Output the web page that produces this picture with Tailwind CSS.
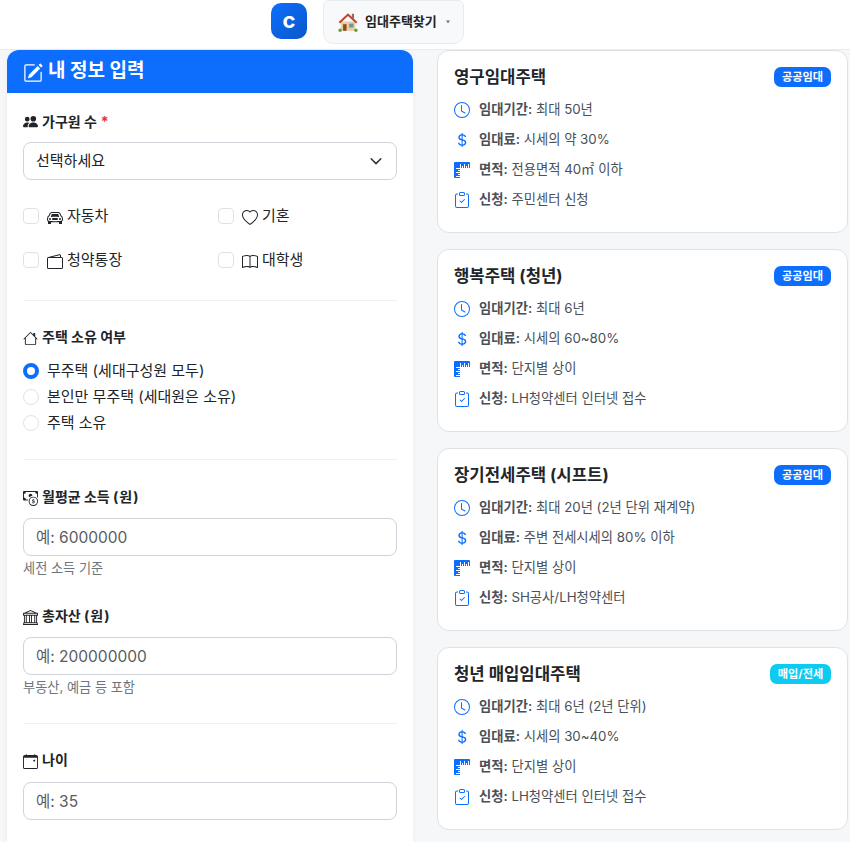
<!DOCTYPE html>
<html lang="ko">
<head>
<meta charset="utf-8">
<script src="https://cdn.jsdelivr.net/npm/@tailwindcss/browser@4"></script>
<title>임대주택찾기</title>
</head>
<body class="h-[842px] overflow-hidden bg-[#f6f7f9] text-[#212529] font-['Inter','Noto_Sans_CJK_KR',sans-serif]">
<header class="h-[50px] bg-white border-b border-[#e9ecef] flex items-start pl-[271px] gap-4">
  <div class="mt-[3px] w-9 h-9 rounded-[10px] bg-gradient-to-br from-[#0d6efd] to-[#0a58ca] flex items-center justify-center text-white font-bold text-[22px] leading-none pb-[2px]">c</div>
  <button class="h-[44px] w-[141px] rounded-b-[10px] rounded-t-[6px] bg-[#f8f9fa] border border-[#e9ecef] flex items-center pl-[13px] text-[13px] font-semibold text-[#212529]">
    <svg viewBox="0 0 20 20" class="w-[22px] h-[22px] mr-[6px] shrink-0"><path d="M3.500 9.500h13V18h-13z" fill="#e8cfa0"/><path d="M1.500 10 10 2l8.500 8-1.300 1.300L10 4.500 2.800 11.300z" fill="#c0452f"/><path d="M13.500 2.500h2v4.500h-2z" fill="#9c6b4f"/><path d="M5.500 12h3.200v6H5.500z" fill="#8a4b2a"/><path d="M11 11.500h4V15h-4z" fill="#6f93a8"/><circle cx="2.800" cy="17.500" r="1.500" fill="#5f9e3a"/><circle cx="17.200" cy="17.500" r="1.500" fill="#5f9e3a"/></svg>
    임대주택찾기
    <svg viewBox="0 0 8 8" class="w-1 h-1 ml-[9px] fill-[#6c757d]"><path d="M0 1h8L4 7z"/></svg>
  </button>
</header>
<main class="flex items-start pl-[7px] gap-6">
  <section class="w-[406px] shrink-0 bg-white rounded-t-[12px] shadow-[0_1px_6px_rgba(0,0,0,0.05)] h-[792px] overflow-hidden">
    <h2 class="h-[43px] bg-[#0d6efd] text-white flex items-center pl-4 text-[19px] font-bold gap-[5px] pb-[1px]">
      <svg viewBox="0 0 16 16" class="w-5 h-5 fill-white mt-[3px] shrink-0"><path d="M15.502 1.940a.5.5 0 0 1 0 .706L14.459 3.690l-2-2L13.502.646a.5.5 0 0 1 .707 0l1.293 1.293zm-1.750 2.456-2-2L4.939 9.210a.5.5 0 0 0-.121.196l-.805 2.414a.25.25 0 0 0 .316.316l2.414-.805a.5.5 0 0 0 .196-.12l6.813-6.814z"/><path fill-rule="evenodd" d="M1 13.500A1.500 1.500 0 0 0 2.500 15h11a1.500 1.500 0 0 0 1.500-1.500v-6a.5.5 0 0 0-1 0v6a.5.5 0 0 1-.5.5h-11a.5.5 0 0 1-.5-.5v-11a.5.5 0 0 1 .5-.5H9a.5.5 0 0 0 0-1H2.500A1.500 1.500 0 0 0 1 2.500z"/></svg>
      내 정보 입력
    </h2>
    <div class="px-4 pt-[18px]">
      <label class="flex items-center h-[21px] text-[14px] font-bold mb-[10px] gap-1">
        <svg viewBox="0 0 16 16" class="w-[15px] h-[15px] fill-[#212529] shrink-0"><path d="M7 14s-1 0-1-1 1-4 5-4 5 3 5 4-1 1-1 1zm4-6a3 3 0 1 0 0-6 3 3 0 0 0 0 6m-5.784 6A2.240 2.240 0 0 1 5 13c0-1.355.68-2.750 1.936-3.720A6.300 6.300 0 0 0 5 9c-4 0-5 3-5 4s1 1 1 1zM4.500 8a2.500 2.500 0 1 0 0-5 2.500 2.500 0 0 0 0 5"/></svg>
        가구원 수 <span class="text-[#dc3545]">*</span>
      </label>
      <div class="relative">
        <select class="w-full h-[38px] appearance-none bg-white border border-[#ced4da] rounded-lg pl-3 text-[15px] text-[#212529]"><option>선택하세요</option></select>
        <svg viewBox="0 0 16 16" class="absolute right-[14px] top-3 w-[14px] h-[14px] fill-none stroke-[#343a40] stroke-[1.8]"><path stroke-linecap="round" stroke-linejoin="round" d="m2.500 5.500 5.500 5.500 5.500-5.500"/></svg>
      </div>
      <div class="grid grid-cols-2 gap-x-[16px] mt-[14px] text-[15px]">
        <div class="h-[44px] flex items-center">
          <span class="w-4 h-4 border border-[#dee2e6] rounded-[4px] mr-2 shrink-0"></span>
          <svg viewBox="0 0 16 16" class="w-4 h-4 fill-[#212529] mr-1 shrink-0 mt-[3px]"><path d="M4 9a1 1 0 1 1-2 0 1 1 0 0 1 2 0m10 0a1 1 0 1 1-2 0 1 1 0 0 1 2 0M6 8a1 1 0 0 0 0 2h4a1 1 0 1 0 0-2zM4.862 4.276 3.906 6.190a.51.51 0 0 0 .497.731c.91-.073 2.350-.17 3.597-.17s2.688.097 3.597.17a.51.51 0 0 0 .497-.731l-.956-1.913A.5.5 0 0 0 11.691 4H4.309a.5.5 0 0 0-.447.276"/><path d="M2.520 3.515A2.500 2.500 0 0 1 4.820 2h6.362c1 0 1.904.596 2.298 1.515l.792 1.848c.075.175.21.319.38.404.5.25.855.715.965 1.262l.335 1.679q.05.242.049.49v.413c0 .814-.39 1.543-1 1.997V13.500a.5.5 0 0 1-.5.5h-2a.5.5 0 0 1-.5-.5v-1.338c-1.292.048-2.745.088-4 .088s-2.708-.04-4-.088V13.500a.5.5 0 0 1-.5.5h-2a.5.5 0 0 1-.5-.5v-1.892c-.61-.454-1-1.183-1-1.997v-.413a2.500 2.500 0 0 1 .049-.49l.335-1.680c.11-.546.465-1.012.964-1.261a.8.8 0 0 0 .381-.404l.792-1.848ZM4.820 3a1.500 1.500 0 0 0-1.379.91l-.792 1.847a1.800 1.800 0 0 1-.853.904.81.81 0 0 0-.43.564L1.030 8.904a1.500 1.500 0 0 0-.03.294v.413c0 .796.62 1.448 1.408 1.484 1.555.07 3.786.155 5.592.155s4.037-.084 5.592-.155A1.480 1.480 0 0 0 15 9.611v-.413q0-.148-.03-.294l-.335-1.680a.8.8 0 0 0-.43-.563 1.800 1.800 0 0 1-.853-.904l-.792-1.848A1.500 1.500 0 0 0 11.180 3z"/></svg>
          자동차
        </div>
        <div class="h-[44px] flex items-center">
          <span class="w-4 h-4 border border-[#dee2e6] rounded-[4px] mr-2 shrink-0"></span>
          <svg viewBox="0 0 16 16" class="w-4 h-4 fill-[#212529] mr-1 shrink-0 mt-[3px]"><path d="m8 2.748-.717-.737C5.600.281 2.514.878 1.400 3.053c-.523 1.023-.641 2.500.314 4.385.92 1.815 2.834 3.989 6.286 6.357 3.452-2.368 5.365-4.542 6.286-6.357.955-1.886.838-3.362.314-4.385C13.486.878 10.400.28 8.717 2.010zM8 15C-7.333 4.868 3.279-3.040 7.824 1.143q.09.083.176.171a3 3 0 0 1 .176-.17C12.720-3.042 23.333 4.867 8 15"/></svg>
          기혼
        </div>
        <div class="h-[44px] flex items-center">
          <span class="w-4 h-4 border border-[#dee2e6] rounded-[4px] mr-2 shrink-0"></span>
          <svg viewBox="0 0 16 16" class="w-4 h-4 fill-[#212529] mr-1 shrink-0 mt-[3px]"><path d="M12.136.326A1.500 1.500 0 0 1 14 1.780V3h.5A1.500 1.500 0 0 1 16 4.500v9a1.500 1.500 0 0 1-1.500 1.500h-13A1.500 1.500 0 0 1 0 13.500v-9a1.500 1.500 0 0 1 1.432-1.499zM5.562 3H13V1.780a.5.5 0 0 0-.621-.484zM1.500 4a.5.5 0 0 0-.5.5v9a.5.5 0 0 0 .5.5h13a.5.5 0 0 0 .5-.5v-9a.5.5 0 0 0-.5-.5z"/></svg>
          청약통장
        </div>
        <div class="h-[44px] flex items-center">
          <span class="w-4 h-4 border border-[#dee2e6] rounded-[4px] mr-2 shrink-0"></span>
          <svg viewBox="0 0 16 16" class="w-4 h-4 fill-[#212529] mr-1 shrink-0 mt-[3px]"><path d="M1 2.828c.885-.37 2.154-.769 3.388-.893 1.330-.134 2.458.063 3.112.752v9.746c-.935-.53-2.120-.603-3.213-.493-1.180.12-2.370.461-3.287.811zm7.500-.141c.654-.689 1.782-.886 3.112-.752 1.234.124 2.503.523 3.388.893v9.923c-.918-.35-2.107-.692-3.287-.81-1.094-.111-2.278-.039-3.213.492zM8 1.783C7.015.936 5.587.81 4.287.94c-1.514.153-3.042.672-3.994 1.105A.5.5 0 0 0 0 2.500v11a.5.5 0 0 0 .707.455c.882-.4 2.303-.881 3.680-1.020 1.409-.142 2.590.087 3.223.877a.5.5 0 0 0 .78 0c.633-.79 1.814-1.019 3.222-.877 1.378.139 2.800.62 3.681 1.020A.5.5 0 0 0 16 13.500v-11a.5.5 0 0 0-.293-.455c-.952-.433-2.480-.952-3.994-1.105C10.413.809 8.985.936 8 1.783"/></svg>
          대학생
        </div>
      </div>
      <hr class="border-[#eef0f2] mt-[18px]">
      <label class="flex items-center h-[21px] text-[14px] font-bold mt-[25px] mb-[11px] gap-1">
        <svg viewBox="0 0 16 16" class="w-[15px] h-[15px] fill-[#212529] shrink-0 mt-[3px]"><path d="M8.707 1.500a1 1 0 0 0-1.414 0L.646 8.146a.5.5 0 0 0 .708.708L2 8.207V13.500A1.500 1.500 0 0 0 3.500 15h9a1.500 1.500 0 0 0 1.500-1.500V8.207l.646.647a.5.5 0 0 0 .708-.708L13 5.793V2.500a.5.5 0 0 0-.5-.5h-1a.5.5 0 0 0-.5.5v1.293zM13 7.207V13.500a.5.5 0 0 1-.5.5h-9a.5.5 0 0 1-.5-.5V7.207l5-5z"/></svg>
        주택 소유 여부
      </label>
      <div class="text-[15px]">
        <div class="h-[26px] flex items-center gap-2"><span class="w-4 h-4 rounded-full border-[4.5px] border-[#0d6efd] bg-white shrink-0"></span>무주택 (세대구성원 모두)</div>
        <div class="h-[26px] flex items-center gap-2"><span class="w-4 h-4 rounded-full border border-[#dee2e6] shrink-0"></span>본인만 무주택 (세대원은 소유)</div>
        <div class="h-[26px] flex items-center gap-2"><span class="w-4 h-4 rounded-full border border-[#dee2e6] shrink-0"></span>주택 소유</div>
      </div>
      <hr class="border-[#eef0f2] mt-[23px]">
      <label class="flex items-center h-[21px] text-[14px] font-bold mt-[26px] mb-[11px] gap-1">
        <svg viewBox="0 0 16 16" class="w-[15px] h-[15px] fill-[#212529] shrink-0 mt-[3px]"><path fill-rule="evenodd" d="M11 15a4 4 0 1 0 0-8 4 4 0 0 0 0 8m5-4a5 5 0 1 1-10 0 5 5 0 0 1 10 0"/><path d="M9.438 11.944c.047.596.518 1.060 1.363 1.116v.44h.375v-.443c.875-.061 1.386-.529 1.386-1.207 0-.618-.39-.936-1.090-1.100l-.296-.07v-1.200c.376.043.614.248.671.532h.658c-.047-.575-.54-1.024-1.329-1.073V8.500h-.375v.45c-.747.073-1.255.522-1.255 1.158 0 .562.378.92 1.007 1.066l.248.061v1.272c-.384-.058-.639-.27-.696-.563h-.668zm1.360-1.354c-.369-.085-.569-.26-.569-.522 0-.294.216-.514.572-.578v1.100zm.432.746c.449.104.655.272.655.569 0 .339-.257.571-.709.614v-1.195z"/><path d="M1 0a1 1 0 0 0-1 1v8a1 1 0 0 0 1 1h4.083q.088-.517.258-1H3a2 2 0 0 0-2-2V3a2 2 0 0 0 2-2h10a2 2 0 0 0 2 2v3.528c.38.34.717.728 1 1.154V1a1 1 0 0 0-1-1z"/><path d="M9.998 5.083 10 5a2 2 0 1 0-3.132 1.650 6 6 0 0 1 3.130-1.567"/></svg>
        <span>월평균 소득 <span class="tracking-[1px]">(원)</span></span>
      </label>
      <input placeholder="예: 6000000" class="w-full h-[38px] border border-[#ced4da] rounded-lg px-3 text-[15.5px] placeholder:text-[#595c5f]">
      <p class="text-[13.2px] leading-[19px] text-[#6c757d] mt-[3px]">세전 소득 기준</p>
      <label class="flex items-center h-[21px] text-[14px] font-bold mt-[27px] mb-[11px] gap-1">
        <svg viewBox="0 0 16 16" class="w-[15px] h-[15px] fill-[#212529] shrink-0 mt-[3px]"><path d="m8 0 6.610 3h.89a.5.5 0 0 1 .5.5v2a.5.5 0 0 1-.5.5H15v7a.5.5 0 0 1 .485.38l.5 2a.498.498 0 0 1-.485.62H.5a.498.498 0 0 1-.485-.62l.5-2A.5.5 0 0 1 1 13V6H.5a.5.5 0 0 1-.5-.5v-2A.5.5 0 0 1 .5 3h.89zM3.777 3h8.447L8 1zM2 6v7h1V6zm2 0v7h2.500V6zm3.500 0v7h1V6zm2 0v7H12V6zM13 6v7h1V6zm2-1V4H1v1zm-.39 9H1.390l-.25 1h13.720z"/></svg>
        <span>총자산 <span class="tracking-[1px]">(원)</span></span>
      </label>
      <input placeholder="예: 200000000" class="w-full h-[38px] border border-[#ced4da] rounded-lg px-3 text-[15.5px] placeholder:text-[#595c5f]">
      <p class="text-[13.2px] leading-[19px] text-[#6c757d] mt-[3px]">부동산, 예금 등 포함</p>
      <hr class="border-[#eef0f2] mt-[26px]">
      <label class="flex items-center h-[21px] text-[14px] font-bold mt-[25px] mb-[12px] gap-1">
        <svg viewBox="0 0 16 16" class="w-[15px] h-[15px] fill-[#212529] shrink-0 mt-[3px]"><path d="M11 6.500a.5.5 0 0 1 .5-.5h1a.5.5 0 0 1 .5.5v1a.5.5 0 0 1-.5.5h-1a.5.5 0 0 1-.5-.5z"/><path d="M3.500 0a.5.5 0 0 1 .5.5V1h8V.5a.5.5 0 0 1 1 0V1h1a2 2 0 0 1 2 2v11a2 2 0 0 1-2 2H2a2 2 0 0 1-2-2V3a2 2 0 0 1 2-2h1V.5a.5.5 0 0 1 .5-.5M1 4v10a1 1 0 0 0 1 1h12a1 1 0 0 0 1-1V4z"/></svg>
        나이
      </label>
      <input placeholder="예: 35" class="w-full h-[38px] border border-[#ced4da] rounded-lg px-3 text-[15.5px] placeholder:text-[#595c5f]">
    </div>
  </section>

  <section class="w-[411px] shrink-0 flex flex-col gap-4">
    <article class="h-[183px] bg-white border border-[#dee2e6] rounded-[12px] p-4">
      <div class="flex items-center justify-between h-5 mb-[7px]">
        <h3 class="text-[16.7px] font-bold pt-[2px]">영구임대주택</h3>
        <span class="h-5 w-[57px] justify-center rounded-[7px] bg-[#0d6efd] text-white text-[11.2px] font-bold flex items-center">공공임대</span>
      </div>
      <ul class="text-[13.3px] text-[#495057] [&_span]:pt-[2px]">
        <li class="h-[30px] flex items-center">
          <svg viewBox="0 0 16 16" class="w-4 h-4 fill-[#0d6efd] mr-[9px] mt-[2px] shrink-0"><path d="M8 3.500a.5.5 0 0 0-1 0V9a.5.5 0 0 0 .252.434l3.500 2a.5.5 0 0 0 .496-.868L8 8.710z"/><path d="M8 16A8 8 0 0 0 8 0a8 8 0 0 0 0 16m7-8A7 7 0 1 1 1 8a7 7 0 0 1 14 0"/></svg>
          <span><b class="font-semibold">임대기간:</b> 최대 50년</span>
        </li>
        <li class="h-[30px] flex items-center">
          <svg viewBox="0 0 16 16" class="w-4 h-4 fill-[#0d6efd] mr-[9px] mt-[2px] shrink-0"><path d="M4 10.781c.148 1.667 1.513 2.850 3.591 3.003V15h1.043v-1.216c2.270-.179 3.678-1.438 3.678-3.300 0-1.590-.947-2.510-2.956-3.028l-.722-.187V3.467c1.122.11 1.879.714 2.070 1.616h1.470c-.166-1.600-1.540-2.748-3.540-2.875V1H7.591v1.233c-1.939.23-3.270 1.472-3.270 3.156 0 1.454.966 2.483 2.661 2.917l.61.162v4.031c-1.149-.17-1.940-.8-2.131-1.718zm3.391-3.836c-1.043-.263-1.600-.825-1.600-1.616 0-.944.704-1.641 1.800-1.828v3.495l-.2-.05zm1.591 1.872c1.287.323 1.852.859 1.852 1.769 0 1.097-.826 1.828-2.200 1.939V8.730z"/></svg>
          <span><b class="font-semibold">임대료:</b> 시세의 약 30%</span>
        </li>
        <li class="h-[30px] flex items-center">
          <svg viewBox="0 0 16 16" class="w-4 h-4 fill-[#0d6efd] mr-[9px] mt-[2px] shrink-0"><path d="M1 0a1 1 0 0 0-1 1v14a1 1 0 0 0 1 1h5v-1H2v-1h4v-1H4v-1h2v-1H2v-1h4V9H4V8h2V7H2V6h4V2h1v4h1V4h1v2h1V2h1v4h1V4h1v2h1V2h1v4h1V1a1 1 0 0 0-1-1z"/></svg>
          <span><b class="font-semibold">면적:</b> 전용면적 40㎡ 이하</span>
        </li>
        <li class="h-[30px] flex items-center">
          <svg viewBox="0 0 16 16" class="w-4 h-4 fill-[#0d6efd] mr-[9px] mt-[2px] shrink-0"><path fill-rule="evenodd" d="M10.854 7.146a.5.5 0 0 1 0 .708l-3 3a.5.5 0 0 1-.708 0l-1.500-1.500a.5.5 0 1 1 .708-.708L7.500 9.793l2.646-2.647a.5.5 0 0 1 .708 0"/><path d="M4 1.500H3a2 2 0 0 0-2 2V14a2 2 0 0 0 2 2h10a2 2 0 0 0 2-2V3.500a2 2 0 0 0-2-2h-1v1h1a1 1 0 0 1 1 1V14a1 1 0 0 1-1 1H3a1 1 0 0 1-1-1V3.500a1 1 0 0 1 1-1h1z"/><path d="M9.500 1a.5.5 0 0 1 .5.5v1a.5.5 0 0 1-.5.5h-3a.5.5 0 0 1-.5-.5v-1a.5.5 0 0 1 .5-.5zm-3-1A1.500 1.500 0 0 0 5 1.500v1A1.500 1.500 0 0 0 6.500 4h3A1.500 1.500 0 0 0 11 2.500v-1A1.500 1.500 0 0 0 9.500 0z"/></svg>
          <span><b class="font-semibold">신청:</b> 주민센터 신청</span>
        </li>
      </ul>
    </article>

    <article class="h-[183px] bg-white border border-[#dee2e6] rounded-[12px] p-4">
      <div class="flex items-center justify-between h-5 mb-[7px]">
        <h3 class="text-[16.7px] font-bold pt-[2px]">행복주택 (청년)</h3>
        <span class="h-5 w-[57px] justify-center rounded-[7px] bg-[#0d6efd] text-white text-[11.2px] font-bold flex items-center">공공임대</span>
      </div>
      <ul class="text-[13.3px] text-[#495057] [&_span]:pt-[2px]">
        <li class="h-[30px] flex items-center">
          <svg viewBox="0 0 16 16" class="w-4 h-4 fill-[#0d6efd] mr-[9px] mt-[2px] shrink-0"><path d="M8 3.500a.5.5 0 0 0-1 0V9a.5.5 0 0 0 .252.434l3.500 2a.5.5 0 0 0 .496-.868L8 8.710z"/><path d="M8 16A8 8 0 0 0 8 0a8 8 0 0 0 0 16m7-8A7 7 0 1 1 1 8a7 7 0 0 1 14 0"/></svg>
          <span><b class="font-semibold">임대기간:</b> 최대 6년</span>
        </li>
        <li class="h-[30px] flex items-center">
          <svg viewBox="0 0 16 16" class="w-4 h-4 fill-[#0d6efd] mr-[9px] mt-[2px] shrink-0"><path d="M4 10.781c.148 1.667 1.513 2.850 3.591 3.003V15h1.043v-1.216c2.270-.179 3.678-1.438 3.678-3.300 0-1.590-.947-2.510-2.956-3.028l-.722-.187V3.467c1.122.11 1.879.714 2.070 1.616h1.470c-.166-1.600-1.540-2.748-3.540-2.875V1H7.591v1.233c-1.939.23-3.270 1.472-3.270 3.156 0 1.454.966 2.483 2.661 2.917l.61.162v4.031c-1.149-.17-1.940-.8-2.131-1.718zm3.391-3.836c-1.043-.263-1.600-.825-1.600-1.616 0-.944.704-1.641 1.800-1.828v3.495l-.2-.05zm1.591 1.872c1.287.323 1.852.859 1.852 1.769 0 1.097-.826 1.828-2.200 1.939V8.730z"/></svg>
          <span><b class="font-semibold">임대료:</b> 시세의 60~80%</span>
        </li>
        <li class="h-[30px] flex items-center">
          <svg viewBox="0 0 16 16" class="w-4 h-4 fill-[#0d6efd] mr-[9px] mt-[2px] shrink-0"><path d="M1 0a1 1 0 0 0-1 1v14a1 1 0 0 0 1 1h5v-1H2v-1h4v-1H4v-1h2v-1H2v-1h4V9H4V8h2V7H2V6h4V2h1v4h1V4h1v2h1V2h1v4h1V4h1v2h1V2h1v4h1V1a1 1 0 0 0-1-1z"/></svg>
          <span><b class="font-semibold">면적:</b> 단지별 상이</span>
        </li>
        <li class="h-[30px] flex items-center">
          <svg viewBox="0 0 16 16" class="w-4 h-4 fill-[#0d6efd] mr-[9px] mt-[2px] shrink-0"><path fill-rule="evenodd" d="M10.854 7.146a.5.5 0 0 1 0 .708l-3 3a.5.5 0 0 1-.708 0l-1.500-1.500a.5.5 0 1 1 .708-.708L7.500 9.793l2.646-2.647a.5.5 0 0 1 .708 0"/><path d="M4 1.500H3a2 2 0 0 0-2 2V14a2 2 0 0 0 2 2h10a2 2 0 0 0 2-2V3.500a2 2 0 0 0-2-2h-1v1h1a1 1 0 0 1 1 1V14a1 1 0 0 1-1 1H3a1 1 0 0 1-1-1V3.500a1 1 0 0 1 1-1h1z"/><path d="M9.500 1a.5.5 0 0 1 .5.5v1a.5.5 0 0 1-.5.5h-3a.5.5 0 0 1-.5-.5v-1a.5.5 0 0 1 .5-.5zm-3-1A1.500 1.500 0 0 0 5 1.500v1A1.500 1.500 0 0 0 6.500 4h3A1.500 1.500 0 0 0 11 2.500v-1A1.500 1.500 0 0 0 9.500 0z"/></svg>
          <span><b class="font-semibold">신청:</b> LH청약센터 인터넷 접수</span>
        </li>
      </ul>
    </article>

    <article class="h-[183px] bg-white border border-[#dee2e6] rounded-[12px] p-4">
      <div class="flex items-center justify-between h-5 mb-[7px]">
        <h3 class="text-[16.7px] font-bold pt-[2px]">장기전세주택 (시프트)</h3>
        <span class="h-5 w-[57px] justify-center rounded-[7px] bg-[#0d6efd] text-white text-[11.2px] font-bold flex items-center">공공임대</span>
      </div>
      <ul class="text-[13.3px] text-[#495057] [&_span]:pt-[2px]">
        <li class="h-[30px] flex items-center">
          <svg viewBox="0 0 16 16" class="w-4 h-4 fill-[#0d6efd] mr-[9px] mt-[2px] shrink-0"><path d="M8 3.500a.5.5 0 0 0-1 0V9a.5.5 0 0 0 .252.434l3.500 2a.5.5 0 0 0 .496-.868L8 8.710z"/><path d="M8 16A8 8 0 0 0 8 0a8 8 0 0 0 0 16m7-8A7 7 0 1 1 1 8a7 7 0 0 1 14 0"/></svg>
          <span><b class="font-semibold">임대기간:</b> 최대 20년 (2년 단위 재계약)</span>
        </li>
        <li class="h-[30px] flex items-center">
          <svg viewBox="0 0 16 16" class="w-4 h-4 fill-[#0d6efd] mr-[9px] mt-[2px] shrink-0"><path d="M4 10.781c.148 1.667 1.513 2.850 3.591 3.003V15h1.043v-1.216c2.270-.179 3.678-1.438 3.678-3.300 0-1.590-.947-2.510-2.956-3.028l-.722-.187V3.467c1.122.11 1.879.714 2.070 1.616h1.470c-.166-1.600-1.540-2.748-3.540-2.875V1H7.591v1.233c-1.939.23-3.270 1.472-3.270 3.156 0 1.454.966 2.483 2.661 2.917l.61.162v4.031c-1.149-.17-1.940-.8-2.131-1.718zm3.391-3.836c-1.043-.263-1.600-.825-1.600-1.616 0-.944.704-1.641 1.800-1.828v3.495l-.2-.05zm1.591 1.872c1.287.323 1.852.859 1.852 1.769 0 1.097-.826 1.828-2.200 1.939V8.730z"/></svg>
          <span><b class="font-semibold">임대료:</b> 주변 전세시세의 80% 이하</span>
        </li>
        <li class="h-[30px] flex items-center">
          <svg viewBox="0 0 16 16" class="w-4 h-4 fill-[#0d6efd] mr-[9px] mt-[2px] shrink-0"><path d="M1 0a1 1 0 0 0-1 1v14a1 1 0 0 0 1 1h5v-1H2v-1h4v-1H4v-1h2v-1H2v-1h4V9H4V8h2V7H2V6h4V2h1v4h1V4h1v2h1V2h1v4h1V4h1v2h1V2h1v4h1V1a1 1 0 0 0-1-1z"/></svg>
          <span><b class="font-semibold">면적:</b> 단지별 상이</span>
        </li>
        <li class="h-[30px] flex items-center">
          <svg viewBox="0 0 16 16" class="w-4 h-4 fill-[#0d6efd] mr-[9px] mt-[2px] shrink-0"><path fill-rule="evenodd" d="M10.854 7.146a.5.5 0 0 1 0 .708l-3 3a.5.5 0 0 1-.708 0l-1.500-1.500a.5.5 0 1 1 .708-.708L7.500 9.793l2.646-2.647a.5.5 0 0 1 .708 0"/><path d="M4 1.500H3a2 2 0 0 0-2 2V14a2 2 0 0 0 2 2h10a2 2 0 0 0 2-2V3.500a2 2 0 0 0-2-2h-1v1h1a1 1 0 0 1 1 1V14a1 1 0 0 1-1 1H3a1 1 0 0 1-1-1V3.500a1 1 0 0 1 1-1h1z"/><path d="M9.500 1a.5.5 0 0 1 .5.5v1a.5.5 0 0 1-.5.5h-3a.5.5 0 0 1-.5-.5v-1a.5.5 0 0 1 .5-.5zm-3-1A1.500 1.500 0 0 0 5 1.500v1A1.500 1.500 0 0 0 6.500 4h3A1.500 1.500 0 0 0 11 2.500v-1A1.500 1.500 0 0 0 9.500 0z"/></svg>
          <span><b class="font-semibold">신청:</b> SH공사/LH청약센터</span>
        </li>
      </ul>
    </article>

    <article class="h-[183px] bg-white border border-[#dee2e6] rounded-[12px] p-4">
      <div class="flex items-center justify-between h-5 mb-[7px]">
        <h3 class="text-[16.7px] font-bold pt-[2px]">청년 매입임대주택</h3>
        <span class="h-5 w-[61px] justify-center rounded-[7px] bg-[#0dcaf0] text-white text-[11.2px] font-bold flex items-center">매입/전세</span>
      </div>
      <ul class="text-[13.3px] text-[#495057] [&_span]:pt-[2px]">
        <li class="h-[30px] flex items-center">
          <svg viewBox="0 0 16 16" class="w-4 h-4 fill-[#0d6efd] mr-[9px] mt-[2px] shrink-0"><path d="M8 3.500a.5.5 0 0 0-1 0V9a.5.5 0 0 0 .252.434l3.500 2a.5.5 0 0 0 .496-.868L8 8.710z"/><path d="M8 16A8 8 0 0 0 8 0a8 8 0 0 0 0 16m7-8A7 7 0 1 1 1 8a7 7 0 0 1 14 0"/></svg>
          <span><b class="font-semibold">임대기간:</b> 최대 6년 (2년 단위)</span>
        </li>
        <li class="h-[30px] flex items-center">
          <svg viewBox="0 0 16 16" class="w-4 h-4 fill-[#0d6efd] mr-[9px] mt-[2px] shrink-0"><path d="M4 10.781c.148 1.667 1.513 2.850 3.591 3.003V15h1.043v-1.216c2.270-.179 3.678-1.438 3.678-3.300 0-1.590-.947-2.510-2.956-3.028l-.722-.187V3.467c1.122.11 1.879.714 2.070 1.616h1.470c-.166-1.600-1.540-2.748-3.540-2.875V1H7.591v1.233c-1.939.23-3.270 1.472-3.270 3.156 0 1.454.966 2.483 2.661 2.917l.61.162v4.031c-1.149-.17-1.940-.8-2.131-1.718zm3.391-3.836c-1.043-.263-1.600-.825-1.600-1.616 0-.944.704-1.641 1.800-1.828v3.495l-.2-.05zm1.591 1.872c1.287.323 1.852.859 1.852 1.769 0 1.097-.826 1.828-2.200 1.939V8.730z"/></svg>
          <span><b class="font-semibold">임대료:</b> 시세의 30~40%</span>
        </li>
        <li class="h-[30px] flex items-center">
          <svg viewBox="0 0 16 16" class="w-4 h-4 fill-[#0d6efd] mr-[9px] mt-[2px] shrink-0"><path d="M1 0a1 1 0 0 0-1 1v14a1 1 0 0 0 1 1h5v-1H2v-1h4v-1H4v-1h2v-1H2v-1h4V9H4V8h2V7H2V6h4V2h1v4h1V4h1v2h1V2h1v4h1V4h1v2h1V2h1v4h1V1a1 1 0 0 0-1-1z"/></svg>
          <span><b class="font-semibold">면적:</b> 단지별 상이</span>
        </li>
        <li class="h-[30px] flex items-center">
          <svg viewBox="0 0 16 16" class="w-4 h-4 fill-[#0d6efd] mr-[9px] mt-[2px] shrink-0"><path fill-rule="evenodd" d="M10.854 7.146a.5.5 0 0 1 0 .708l-3 3a.5.5 0 0 1-.708 0l-1.500-1.500a.5.5 0 1 1 .708-.708L7.500 9.793l2.646-2.647a.5.5 0 0 1 .708 0"/><path d="M4 1.500H3a2 2 0 0 0-2 2V14a2 2 0 0 0 2 2h10a2 2 0 0 0 2-2V3.500a2 2 0 0 0-2-2h-1v1h1a1 1 0 0 1 1 1V14a1 1 0 0 1-1 1H3a1 1 0 0 1-1-1V3.500a1 1 0 0 1 1-1h1z"/><path d="M9.500 1a.5.5 0 0 1 .5.5v1a.5.5 0 0 1-.5.5h-3a.5.5 0 0 1-.5-.5v-1a.5.5 0 0 1 .5-.5zm-3-1A1.500 1.500 0 0 0 5 1.500v1A1.500 1.500 0 0 0 6.500 4h3A1.500 1.500 0 0 0 11 2.500v-1A1.500 1.500 0 0 0 9.500 0z"/></svg>
          <span><b class="font-semibold">신청:</b> LH청약센터 인터넷 접수</span>
        </li>
      </ul>
    </article>
  </section>
</main>
</body>
</html>
